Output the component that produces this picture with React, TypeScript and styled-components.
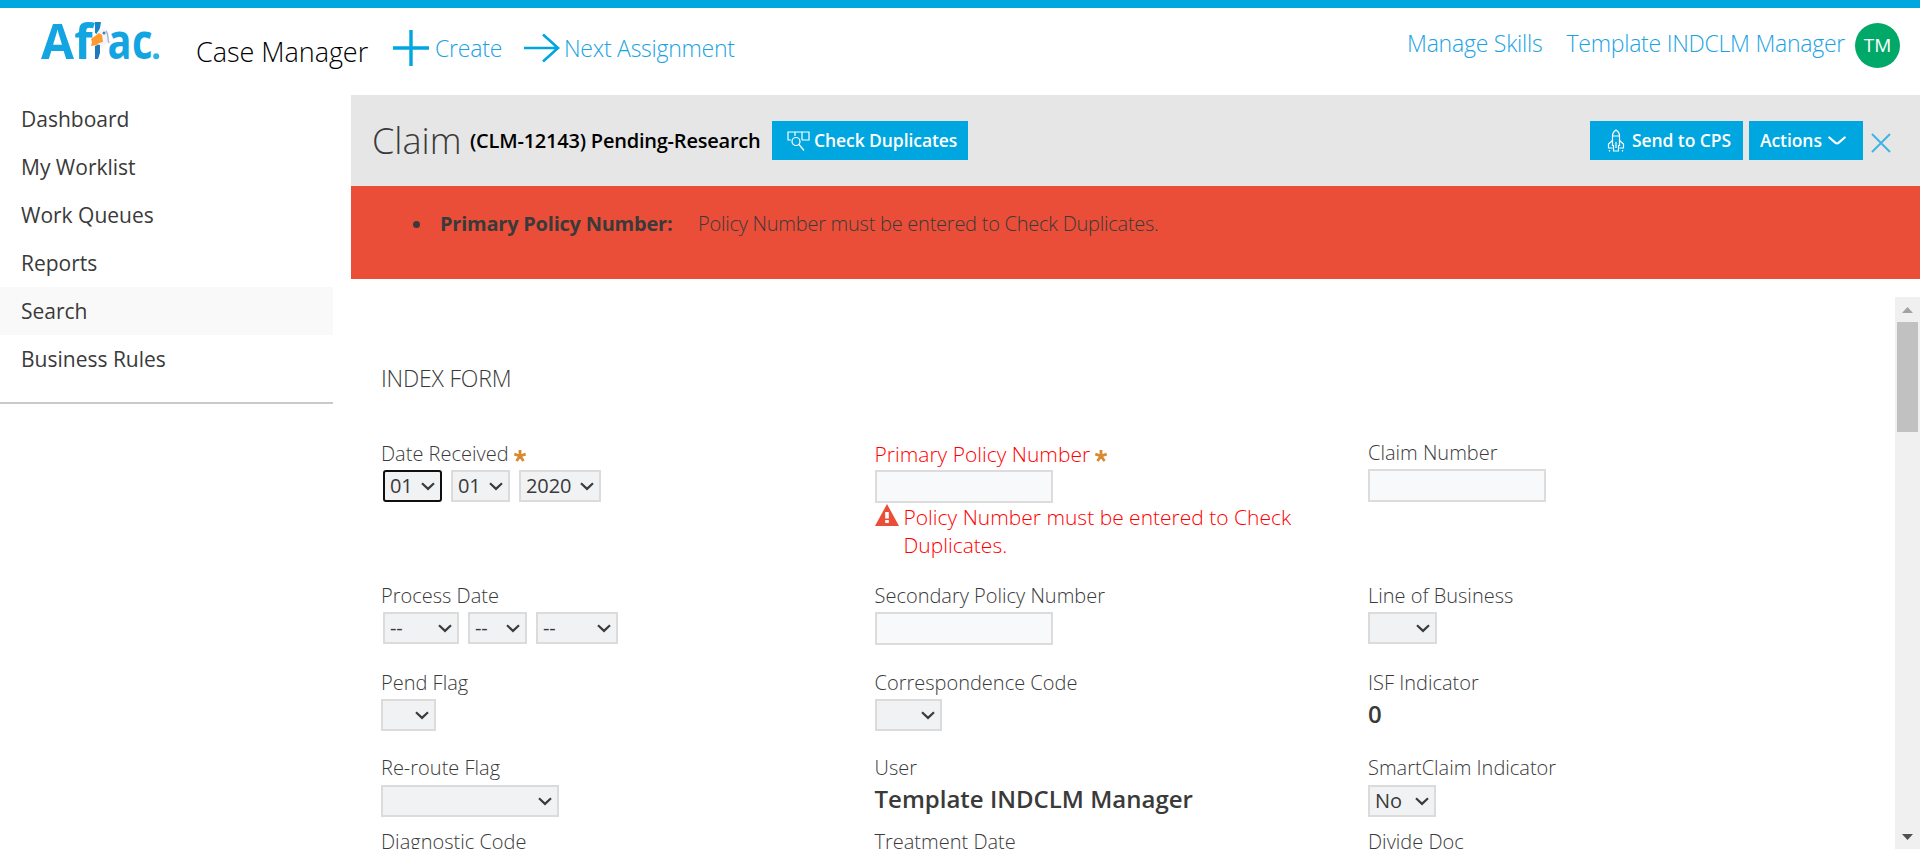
import React from "react";
import styled, { createGlobalStyle } from "styled-components";

const BLUE = "#00a6df";

const GlobalStyle = createGlobalStyle`
  * { box-sizing: border-box; }
  body {
    margin: 0;
    background: #fff;
    color: #3a3a3a;
    font-family: "Open Sans", sans-serif;
    overflow: hidden;
  }
`;

const Page = styled.div`
  display: flex;
  flex-direction: column;
  height: 849px;
  overflow: hidden;
  border-top: 8px solid ${BLUE};
`;

/* ---------- top header ---------- */

const TopHeader = styled.header`
  display: flex;
  align-items: flex-start;
  height: 87px;
  padding: 0 20px 0 36px;
  flex-shrink: 0;
  white-space: nowrap;
`;

const LogoSvg = styled.svg`
  display: block;
  width: 130px;
  height: 74px;
  margin-top: -4px;
`;

const AppName = styled.h1`
  width: 199px;
  margin: 24px 0 0 30px;
  color: #000;
  font-size: 27px;
  font-weight: 300;
  line-height: 40px;
  letter-spacing: -0.05px;
`;

const HeaderLink = styled.a<{ $top: number; $spacing?: number }>`
  display: flex;
  align-items: center;
  height: 32px;
  margin-top: ${(p) => p.$top}px;
  color: #1aa3e4;
  font-size: 23px;
  font-weight: 300;
  line-height: 32px;
  letter-spacing: ${(p) => p.$spacing ?? 0}px;
`;

const CreateLink = styled(HeaderLink)`
  width: 131px;
  margin-left: -2px;
  gap: 6px;
`;

const NextLink = styled(HeaderLink)`
  gap: 4px;
`;

const UserArea = styled.div`
  display: flex;
  align-items: flex-start;
  margin-left: auto;
`;

const SkillsLink = styled(HeaderLink)`
  margin-right: 24px;
`;

const Avatar = styled.div`
  width: 45px;
  height: 45px;
  margin: 15px 0 0 10px;
  border-radius: 50%;
  background: #00a968;
  color: #fff;
  font-size: 19px;
  line-height: 44px;
  text-align: center;
`;

/* ---------- body ---------- */

const Body = styled.div`
  display: flex;
  flex: 1;
  min-height: 0;
  gap: 18px;
`;

const Sidebar = styled.nav`
  width: 333px;
  flex-shrink: 0;
`;

const NavList = styled.ul`
  list-style: none;
  margin: 0;
  padding: 0 0 19px;
  border-bottom: 2px solid #c9c9c9;
`;

const NavItem = styled.li<{ $active?: boolean }>`
  height: 48px;
  padding-left: 21px;
  background: ${(p) => (p.$active ? "#f9f9f9" : "transparent")};
  font-size: 21px;
  line-height: 48px;
`;

const Main = styled.main`
  display: flex;
  flex-direction: column;
  flex: 1;
  min-width: 0;
`;

const CaseBar = styled.div`
  display: flex;
  align-items: flex-start;
  height: 91px;
  flex-shrink: 0;
  padding: 26px 29px 0 21px;
  background: #e6e6e6;
  white-space: nowrap;
`;

const CaseType = styled.h2`
  width: 98px;
  margin: -4px 0 0;
  font-size: 36px;
  font-weight: 300;
  line-height: 48px;
`;

const CaseId = styled.span`
  width: 302px;
  margin-top: 5px;
  color: #000;
  font-size: 20px;
  font-weight: 600;
  letter-spacing: -0.22px;
  line-height: 30px;
`;

const ActionButton = styled.button<{ $width: number; $left: number; $gap: number }>`
  display: flex;
  align-items: center;
  gap: ${(p) => p.$gap}px;
  width: ${(p) => p.$width}px;
  height: 39px;
  padding: 0 0 0 ${(p) => p.$left}px;
  border: 0;
  background: ${BLUE};
  color: #fff;
  font-family: inherit;
  font-size: 17.5px;
  font-weight: 600;
  letter-spacing: -0.08px;
  line-height: 39px;
  white-space: nowrap;
`;

const CaseActions = styled.div`
  display: flex;
  gap: 6px;
  margin-left: auto;
`;

const CloseIcon = styled.svg`
  width: 20px;
  height: 20px;
  margin: 12px 0 0 2px;
`;

const ErrorBanner = styled.ul`
  display: flex;
  flex-shrink: 0;
  height: 93px;
  margin: 0;
  padding: 24px 0 0 62px;
  background: #ea4e38;
  font-size: 20px;
  line-height: 28px;
  white-space: nowrap;
`;

const ErrorItem = styled.li`
  display: flex;
  list-style: none;
  &::before {
    content: "";
    width: 7px;
    height: 7px;
    margin: 11px 20px 0 0;
    border-radius: 50%;
    background: #3a3a3a;
  }
`;

const ErrorField = styled.strong`
  width: 258px;
  font-weight: 700;
  letter-spacing: -0.23px;
`;

const ErrorText = styled.span`
  font-weight: 300;
  letter-spacing: -0.25px;
`;

const ScrollArea = styled.section`
  display: flex;
  flex: 1;
  min-height: 0;
  margin-top: 18px;
  overflow: hidden;
`;

const Form = styled.form`
  flex: 1;
  height: 0;
  padding: 65px 0 0 30px;
`;

const FormTitle = styled.h3`
  margin: 0 0 46px;
  font-size: 23px;
  font-weight: 300;
  line-height: 32px;
  letter-spacing: -0.2px;
`;

const Grid = styled.div`
  display: grid;
  grid-template-columns: repeat(3, 493.5px);
  grid-template-rows: 142px 87px 85px 74px 74px;
`;

const Cell = styled.div<{ $gap?: number; $lift?: boolean }>`
  display: flex;
  flex-direction: column;
  gap: ${(p) => p.$gap ?? 2}px;
  margin-top: ${(p) => (p.$lift ? -1 : 0)}px;
`;

const Label = styled.label<{ $invalid?: boolean }>`
  display: flex;
  height: 28px;
  gap: 4px;
  color: ${(p) => (p.$invalid ? "#f00" : "#3a3a3a")};
  font-size: ${(p) => (p.$invalid ? 21 : 20)}px;
  font-weight: 300;
  line-height: 28px;
  white-space: nowrap;
`;

const StarSvg = styled.svg`
  width: 14px;
  height: 14px;
  margin-top: 9px;
`;

const TextInput = styled.input`
  width: 178px;
  height: 33px;
  border: 2px solid #dcdcdc;
  background: #f8f9fb;
`;

const SelectBox = styled.div<{ $width: number; $focused?: boolean }>`
  display: flex;
  align-items: center;
  justify-content: space-between;
  width: ${(p) => p.$width}px;
  height: 32px;
  padding: 0 5px;
  border: 2px solid ${(p) => (p.$focused ? "#101010" : "#dbdbdb")};
  border-radius: ${(p) => (p.$focused ? 3 : 0)}px;
  background: #f1f2f4;
  font-size: 20px;
  letter-spacing: -0.1px;
  line-height: 28px;
`;

const DateRow = styled.div`
  display: flex;
  gap: 9px;
  padding-left: 2px;
`;

const Value = styled.div`
  font-size: 24px;
  font-weight: 600;
  line-height: 32px;
  white-space: nowrap;
`;

const FieldError = styled.div`
  display: flex;
  width: 440px;
  margin-top: -2px;
  gap: 5px;
  color: #f00;
  font-size: 21px;
  font-weight: 300;
  line-height: 28px;
`;

const WarnSvg = styled.svg`
  flex-shrink: 0;
  width: 24px;
  height: 22px;
  margin-top: 1px;
`;

const Scrollbar = styled.div`
  display: flex;
  flex-direction: column;
  align-items: center;
  width: 25px;
  padding: 10px 0 9px;
  background: #f0f0f0;
`;

const Thumb = styled.div`
  width: 21px;
  height: 110px;
  margin: 9px 0 auto;
  background: #c1c1c1;
`;

const Logo = () => (
  <LogoSvg viewBox="0 -10 130 74" role="img" aria-label="Aflac">
    <g fill="#12a5e2" fontFamily='"Open Sans", sans-serif' fontWeight="700" fontSize="49">
      <text x="5" y="45" textLength="33" lengthAdjust="spacingAndGlyphs">A</text>
      <text x="38.200" y="45" textLength="18.500" lengthAdjust="spacingAndGlyphs">f</text>
      <text x="71.500" y="45" textLength="24" lengthAdjust="spacingAndGlyphs">a</text>
      <text x="96" y="45" textLength="20.500" lengthAdjust="spacingAndGlyphs">c</text>
    </g>
    <circle cx="120.200" cy="42.200" r="3" fill="#2bb3e8" />
    <path d="M59 8h6l-1 6-3 6-2-1z" fill="#1585c8" />
    <path d="M59 32l5-2v9l-2 6h-3z" fill="#2377bd" />
    <path d="M61 19c4-6 11-5 12 0 1 4-1 5-1 9l-6 6-4-5z" fill="#f3f5fa" />
    <path d="M55 25l8-6 3 2 1 7-4 1-2 2-6 1 1-4z" fill="#ff9a2e" />
    <circle cx="68" cy="19" r="1.500" fill="#3f7fae" />
    <path d="M70 17c3 4 1 7 3 12" fill="none" stroke="#a9b7dc" strokeWidth="1.500" />
  </LogoSvg>
);

const Star = () => (
  <StarSvg viewBox="0 0 14 14">
    <path
      d="M7 7V1M7 7L1.300 5.200M7 7l5.700-1.800M7 7l-3.500 5M7 7l3.500 5"
      stroke="#d9892f"
      strokeWidth="2.800"
      fill="none"
    />
  </StarSvg>
);

const Chevron = () => (
  <svg width="14" height="9" viewBox="0 0 14 9">
    <path d="M1 1.300l6 5.600 6-5.600" fill="none" stroke="#3c3c3c" strokeWidth="2.200" />
  </svg>
);

const Select = ({ width, value, focused }: { width: number; value?: string; focused?: boolean }) => (
  <SelectBox $width={width} $focused={focused}>
    <span>{value}</span>
    <Chevron />
  </SelectBox>
);

const nav = ["Dashboard", "My Worklist", "Work Queues", "Reports", "Search", "Business Rules"];

export default function App() {
  return (
    <Page>
      <GlobalStyle />
      <TopHeader>
        <Logo />
        <AppName>Case Manager</AppName>
        <CreateLink $top={24} $spacing={-0.2}>
          <svg width="36" height="36" viewBox="0 0 36 36">
            <path d="M0 18h36M18 0v36" stroke={BLUE} strokeWidth="3.400" />
          </svg>
          Create
        </CreateLink>
        <NextLink $top={24} $spacing={-0.25}>
          <svg width="36" height="30" viewBox="0 0 36 30">
            <path d="M0 15h34M19 1.500L34 15 19 28.500" fill="none" stroke={BLUE} strokeWidth="2.600" />
          </svg>
          Next Assignment
        </NextLink>
        <UserArea>
          <SkillsLink $top={19} $spacing={-0.22}>Manage Skills</SkillsLink>
          <HeaderLink $top={19} $spacing={-0.25}>Template INDCLM Manager</HeaderLink>
          <Avatar>TM</Avatar>
        </UserArea>
      </TopHeader>
      <Body>
        <Sidebar>
          <NavList>
            {nav.map((n) => (
              <NavItem key={n} $active={n === "Search"}>{n}</NavItem>
            ))}
          </NavList>
        </Sidebar>
        <Main>
          <CaseBar>
            <CaseType>Claim</CaseType>
            <CaseId>(CLM-12143) Pending-Research</CaseId>
            <ActionButton $width={196} $left={15} $gap={3}>
              <svg width="24" height="22" viewBox="0 0 24 22" fill="none" stroke="#fff" strokeWidth="1.200">
                <path d="M4 10H1V2h21v8h-7M8 2v4M15 2v8" />
                <circle cx="9" cy="11.500" r="4" />
                <path d="M12 14.500l5 6" />
              </svg>
              <span>Check Duplicates</span>
            </ActionButton>
            <CaseActions>
              <ActionButton $width={153} $left={17} $gap={7}>
                <svg width="18" height="24" viewBox="0 0 18 24" fill="none" stroke="#fff" strokeWidth="1.200">
                  <path d="M5.500 17V7C5.500 4 7 2.300 9 1c2 1.300 3.500 3 3.500 6v10M6 7h6M5.500 11.500L1.500 15v4h4M12.500 11.500l4 3.500v4h-4M9 13v6M6.500 16v6h5v-6" />
                  <path d="M2.500 21v1.500M15.500 21v1.500" />
                </svg>
                <span>Send to CPS</span>
              </ActionButton>
              <ActionButton $width={114} $left={11} $gap={6}>
                <span>Actions</span>
                <svg width="18" height="10" viewBox="0 0 18 10">
                  <path d="M1.300 1.500L7.500 6.800q1.500 1.100 3 0L16.700 1.500" fill="none" stroke="#fff" strokeWidth="2.200" strokeLinecap="round" />
                </svg>
              </ActionButton>
              <CloseIcon viewBox="0 0 20 20">
                <path d="M1 1l18 18M19 1L1 19" stroke="#3fb2e6" strokeWidth="1.900" />
              </CloseIcon>
            </CaseActions>
          </CaseBar>
          <ErrorBanner>
            <ErrorItem>
              <ErrorField>Primary Policy Number:</ErrorField>
              <ErrorText>Policy Number must be entered to Check Duplicates.</ErrorText>
            </ErrorItem>
          </ErrorBanner>
          <ScrollArea>
            <Form>
              <FormTitle>INDEX FORM</FormTitle>
              <Grid>
                <Cell>
                  <Label>Date Received <Star /></Label>
                  <DateRow>
                    <Select width={59} value="01" focused />
                    <Select width={59} value="01" />
                    <Select width={82} value="2020" />
                  </DateRow>
                </Cell>
                <Cell>
                  <Label $invalid>Primary Policy Number <Star /></Label>
                  <TextInput />
                  <FieldError>
                    <WarnSvg viewBox="0 0 24 22">
                      <path d="M12 0l12 22H0z" fill="#ea4e38" />
                      <path d="M10.200 8h3.600v6.500h-3.600zM10.200 16h3.600v3h-3.600z" fill="#fff" />
                    </WarnSvg>
                    Policy Number must be entered to Check Duplicates.
                  </FieldError>
                </Cell>
                <Cell $lift>
                  <Label>Claim Number</Label>
                  <TextInput />
                </Cell>

                <Cell>
                  <Label>Process Date</Label>
                  <DateRow>
                    <Select width={76} value="--" />
                    <Select width={59} value="--" />
                    <Select width={82} value="--" />
                  </DateRow>
                </Cell>
                <Cell>
                  <Label>Secondary Policy Number</Label>
                  <TextInput />
                </Cell>
                <Cell>
                  <Label>Line of Business</Label>
                  <Select width={69} />
                </Cell>

                <Cell>
                  <Label>Pend Flag</Label>
                  <Select width={55} />
                </Cell>
                <Cell>
                  <Label>Correspondence Code</Label>
                  <Select width={67} />
                </Cell>
                <Cell $gap={1}>
                  <Label>ISF Indicator</Label>
                  <Value>0</Value>
                </Cell>

                <Cell $gap={3}>
                  <Label>Re-route Flag</Label>
                  <Select width={178} />
                </Cell>
                <Cell $gap={1}>
                  <Label>User</Label>
                  <Value>Template INDCLM Manager</Value>
                </Cell>
                <Cell $gap={3}>
                  <Label>SmartClaim Indicator</Label>
                  <Select width={68} value="No" />
                </Cell>

                <Cell><Label>Diagnostic Code</Label></Cell>
                <Cell><Label>Treatment Date</Label></Cell>
                <Cell><Label>Divide Doc</Label></Cell>
              </Grid>
            </Form>
            <Scrollbar>
              <svg width="11" height="6" viewBox="0 0 11 6"><path d="M5.500 0L11 6H0z" fill="#a3a3a3" /></svg>
              <Thumb />
              <svg width="11" height="6" viewBox="0 0 11 6"><path d="M0 0h11L5.500 6z" fill="#505050" /></svg>
            </Scrollbar>
          </ScrollArea>
        </Main>
      </Body>
    </Page>
  );
}
